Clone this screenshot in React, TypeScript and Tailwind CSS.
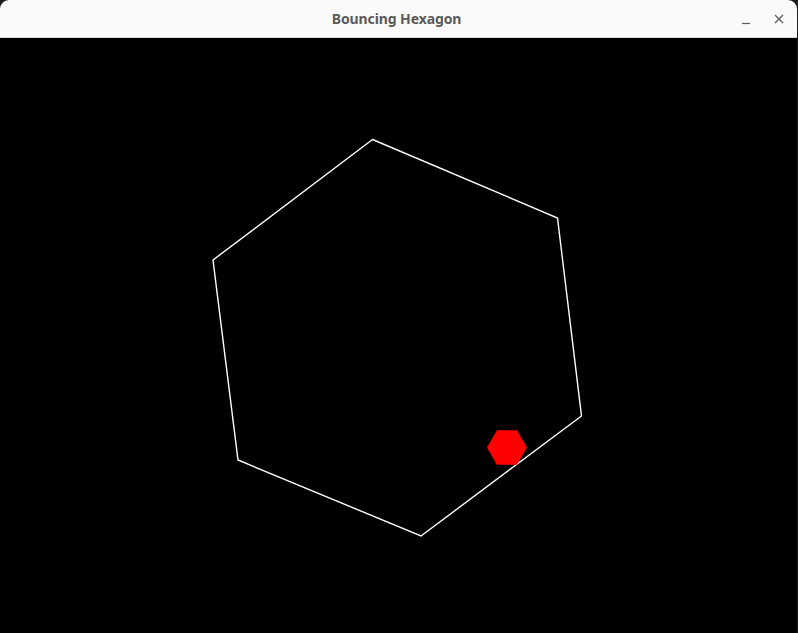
import React from 'react';

// big hexagon outline, measured from the screenshot (canvas coords, y offset by title bar)
const TITLE_H = 38;
const outer = [
  [372.5, 139.5],
  [557.5, 218],
  [581.5, 416],
  [421, 536],
  [238, 460],
  [213, 260],
];

const ball = { cx: 507, cy: 447.5, r: 20 };

const toPoints = (pts: number[][]) =>
  pts.map(([x, y]) => `${x},${y - TITLE_H}`).join(' ');

const ballPoints = () => {
  const pts: number[][] = [];
  for (let i = 0; i < 6; i++) {
    const a = (Math.PI / 3) * i;
    pts.push([ball.cx + ball.r * Math.cos(a), ball.cy + ball.r * Math.sin(a)]);
  }
  return toPoints(pts);
};

export default function App() {
  return (
    <div className="w-[798px] h-[633px] bg-[#1d1d1d] flex flex-col overflow-hidden">
      {/* Title bar */}
      <div className="h-[38px] shrink-0 bg-[#fafafa] rounded-t-[9px] border-b border-[#d6d6d6] mr-px relative flex items-center justify-center">
        <span className="font-['Noto_Sans',sans-serif] font-bold text-[14px] text-[#5b5b5b] tracking-[-0.1px] -ml-[4px]">
          Bouncing Hexagon
        </span>
        <div className="absolute right-[10px] top-0 h-full flex items-center gap-[17px]">
          <svg width="16" height="16" viewBox="0 0 16 16" className="mt-[2px]">
            <line x1="4" y1="11.5" x2="12" y2="11.5" stroke="#5b5b5b" strokeWidth="1.2" />
          </svg>
          <svg width="16" height="16" viewBox="0 0 16 16">
            <line x1="4" y1="4" x2="12" y2="12" stroke="#5b5b5b" strokeWidth="1.3" />
            <line x1="12" y1="4" x2="4" y2="12" stroke="#5b5b5b" strokeWidth="1.3" />
          </svg>
        </div>
      </div>

      {/* Canvas */}
      <div className="flex-1 bg-black mr-px">
        <svg width="797" height="595" viewBox="0 0 797 595" className="block">
          <polygon points={toPoints(outer)} fill="none" stroke="#ffffff" strokeWidth="1.4" />
          <polygon points={ballPoints()} fill="#ff0000" />
        </svg>
      </div>
    </div>
  );
}
